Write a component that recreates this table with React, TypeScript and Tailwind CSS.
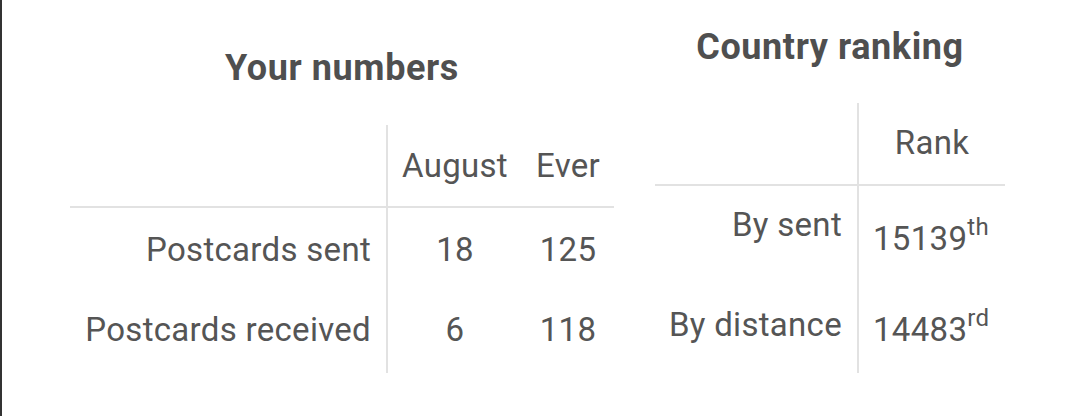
const font = { fontFamily: 'Roboto, "Liberation Sans", sans-serif' }

const Left = () => (
    <div className="flex flex-col w-[544px]">
        <h2 className="text-center text-[36px] leading-[40px] font-bold tracking-[0.6px] text-[#4f4f4f] mb-[37px]">Your numbers</h2>
        <div className="grid grid-cols-[316px_136px_92px] text-[33px] leading-[40px] tracking-[0.3px] text-[#555]">
            <div className="h-[83px] border-b-2 border-[#e2e2e2]" />
            <div className="h-[83px] border-b-2 border-l-2 border-[#e2e2e2] pt-[21px] px-[12px] text-center">August</div>
            <div className="h-[83px] border-b-2 border-[#e2e2e2] pt-[21px] px-[12px] text-center">Ever</div>

            <div className="h-[80px] pt-[22px] pr-[15px] text-right whitespace-nowrap">Postcards sent</div>
            <div className="h-[80px] pt-[22px] px-[15px] text-center border-l-2 border-[#e2e2e2]">18</div>
            <div className="h-[80px] pt-[22px] px-[15px] text-center">125</div>

            <div className="h-[85px] pt-[22px] pr-[15px] text-right whitespace-nowrap">Postcards received</div>
            <div className="h-[85px] pt-[22px] px-[15px] text-center border-l-2 border-[#e2e2e2]">6</div>
            <div className="h-[85px] pt-[22px] px-[15px] text-center">118</div>
        </div>
    </div>
)

const Right = () => (
    <div className="flex flex-col w-[350px]">
        <h2 className="text-center text-[36px] leading-[40px] font-bold tracking-[0.6px] text-[#4f4f4f] mb-[36px]">Country ranking</h2>
        <div className="grid grid-cols-[202px_148px] text-[33px] leading-[40px] tracking-[0.3px] text-[#555]">
            <div className="h-[83px] border-b-2 border-[#e2e2e2]" />
            <div className="h-[83px] border-b-2 border-l-2 border-[#e2e2e2] pt-[20px] px-[15px] text-center">Rank</div>

            <div className="h-[100px] pt-[19px] pr-[15px] text-right whitespace-nowrap">By sent</div>
            <div className="h-[100px] pt-[33px] pl-[14px] border-l-2 border-[#e2e2e2] whitespace-nowrap">
                15139<sup className="text-[24px] -top-[15px]">th</sup>
            </div>

            <div className="h-[87px] pt-[19px] pr-[15px] text-right whitespace-nowrap">By distance</div>
            <div className="h-[87px] pt-[24px] pl-[14px] border-l-2 border-[#e2e2e2] whitespace-nowrap">
                14483<sup className="text-[24px] -top-[15px]">rd</sup>
            </div>
        </div>
    </div>
)

export default function App() {
    return (
        <div style={font} className="w-[1080px] h-[416px] bg-white border-l-2 border-[#333] flex items-end gap-[41px] pl-[68px] pb-[43px]">
            <Left />
            <Right />
        </div>
    )
}
